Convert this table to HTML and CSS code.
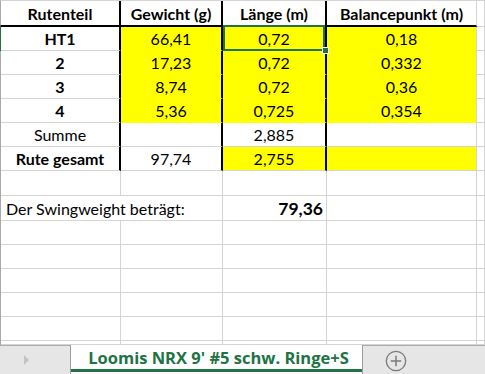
FILE: index.html
```html
<!DOCTYPE html>
<html lang="de">
<head>
<meta charset="utf-8">
<title>Loomis NRX 9' #5</title>
<link rel="stylesheet" href="styles.css">
</head>
<body>
<div class="sheet">
  <div class="grid">
    <div class="c b tr tb">Rutenteil</div>
    <div class="c b tr tb">Gewicht (g)</div>
    <div class="c b tr tb">Länge (m)</div>
    <div class="c b tb">Balancepunkt (m)</div>
    <div class="c"></div>

    <div class="c b tr sel-row">HT1</div>
    <div class="c tr y">66,41</div>
    <div class="c tr y sel">0,72</div>
    <div class="c y">0,18</div>
    <div class="c"></div>

    <div class="c b tr">2</div>
    <div class="c tr y">17,23</div>
    <div class="c tr y">0,72</div>
    <div class="c y">0,332</div>
    <div class="c"></div>

    <div class="c b tr">3</div>
    <div class="c tr y">8,74</div>
    <div class="c tr y">0,72</div>
    <div class="c y">0,36</div>
    <div class="c"></div>

    <div class="c b tr">4</div>
    <div class="c tr y">5,36</div>
    <div class="c tr y">0,725</div>
    <div class="c y">0,354</div>
    <div class="c"></div>

    <div class="c tr">Summe</div>
    <div class="c tr"></div>
    <div class="c tr">2,885</div>
    <div class="c"></div>
    <div class="c"></div>

    <div class="c b tr">Rute gesamt</div>
    <div class="c tr">97,74</div>
    <div class="c tr y2">2,755</div>
    <div class="c y2"></div>
    <div class="c"></div>

    <div class="c"></div><div class="c"></div><div class="c"></div><div class="c"></div><div class="c"></div>

    <div class="c left span2">Der Swingweight beträgt:</div>
    <div class="c right big">79,36</div>
    <div class="c"></div>
    <div class="c"></div>

    <div class="c"></div><div class="c"></div><div class="c"></div><div class="c"></div><div class="c"></div>
    <div class="c"></div><div class="c"></div><div class="c"></div><div class="c"></div><div class="c"></div>
    <div class="c"></div><div class="c"></div><div class="c"></div><div class="c"></div><div class="c"></div>
    <div class="c"></div><div class="c"></div><div class="c"></div><div class="c"></div><div class="c"></div>
    <div class="c"></div><div class="c"></div><div class="c"></div><div class="c"></div><div class="c"></div>
    <div class="c"></div><div class="c"></div><div class="c"></div><div class="c"></div><div class="c"></div>
  </div>
  <div class="tabbar">
    <div class="nav"><span class="arrow"></span></div>
    <div class="tab">Loomis NRX 9' #5 schw. Ringe+S</div>
    <div class="add">
      <svg width="22" height="22" viewBox="0 0 22 22">
        <circle cx="11" cy="11" r="9.7" fill="none" stroke="#7b7b7b" stroke-width="1.3"/>
        <path d="M11 5.8v10.4M5.8 11h10.4" stroke="#7b7b7b" stroke-width="1.5"/>
      </svg>
    </div>
  </div>
</div>
</body>
</html>
```

FILE: styles.css
```css
html, body {
  margin: 0;
  padding: 0;
  background: #ffffff;
  overflow: hidden;
}
.sheet {
  width: 485px;
  height: 374px;
  display: flex;
  flex-direction: column;
  overflow: hidden;
}
.grid {
  display: grid;
  grid-template-columns: 120px 102px 104px 150px 1fr;
  grid-template-rows: 26px 24px 24px 24px 24px 24px 24px 25px 25px 24px 24px 24px 24px 24px 4px;
  border-top: 1px solid #d4d4d4;
  border-left: 1px solid #a9a9a9;
  font-family: Lato, "Liberation Sans", sans-serif;
  font-size: 16px;
  color: #000;
}
.c {
  box-sizing: border-box;
  border-right: 1px solid #d4d4d4;
  border-bottom: 1px solid #d4d4d4;
  display: flex;
  align-items: flex-end;
  justify-content: center;
  padding: 0 3px 3px;
  line-height: 17px;
  white-space: nowrap;
  overflow: visible;
  position: relative;
}
.b { font-weight: 700; }
.tr { border-right: 2px solid #000; }
.tb { border-bottom: 2px solid #000; }
.y { background: #ffff00; border-bottom-color: #ffff00; }
.y2 { background: #ffff00; }
.left { justify-content: flex-start; padding-left: 5px; }
.right { justify-content: flex-end; padding-right: 3px; }
.span2 { grid-column: span 2; }
.big { font-weight: 700; font-size: 17.5px; padding-bottom: 3px; }
.sel::after {
  content: "";
  position: absolute;
  left: 0;
  top: -2px;
  width: 102px;
  height: 26px;
  box-sizing: border-box;
  border: 2px solid #217346;
}
.sel::before {
  content: "";
  position: absolute;
  right: -4px;
  bottom: -4px;
  width: 5px;
  height: 5px;
  background: #217346;
  border: 1px solid #ffffff;
  z-index: 2;
}
.sel-row::before {
  content: "";
  position: absolute;
  left: -1px;
  top: -2px;
  width: 1px;
  height: 26px;
  background: #217346;
}
.tabbar {
  flex: 1;
  display: flex;
  background: #e6e6e6;
  border-top: 1px solid #ababab;
  font-family: "Open Sans", "Noto Sans", sans-serif;
}
.nav {
  width: 70px;
  display: flex;
  align-items: center;
  padding-left: 24px;
  box-sizing: border-box;
}
.arrow {
  width: 0;
  height: 0;
  border-top: 5px solid transparent;
  border-bottom: 5px solid transparent;
  border-left: 5px solid #c3c3c3;
}
.tab {
  width: 293px;
  box-sizing: border-box;
  margin-top: -1px;
  background: #ffffff;
  border-left: 1px solid #9c9c9c;
  border-right: 1px solid #9c9c9c;
  box-shadow: inset 0 -2px 0 #ffffff, inset 0 -5px 0 #217346;
  display: flex;
  align-items: center;
  justify-content: center;
  padding: 0 0 4px 4px;
  color: #217346;
  font-weight: 700;
  font-size: 16.5px;
  white-space: nowrap;
}
.add {
  width: 66px;
  display: flex;
  align-items: center;
  justify-content: center;
  padding-top: 1px;
}
```
